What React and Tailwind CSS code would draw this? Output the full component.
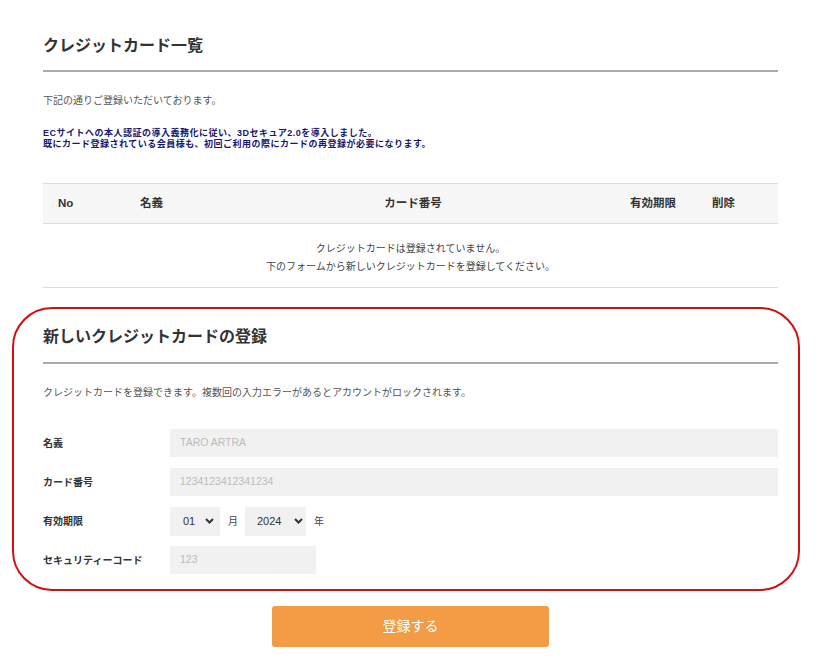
import React from "react";

const FONT = "font-['Liberation_Sans','Noto_Sans_CJK_JP',sans-serif]";

function Chevron() {
  return (
    <svg width="9" height="6" viewBox="0 0 9 6" className="block">
      <path d="M1 1 L4.5 4.5 L8 1" fill="none" stroke="#333" strokeWidth="2" />
    </svg>
  );
}

function Row({ label, children }) {
  return (
    <div className="flex items-center h-[28px]">
      <div className="w-[127px] text-[10px] font-bold text-[#333]">{label}</div>
      <div className="flex-1 flex items-center h-full">{children}</div>
    </div>
  );
}

export default function App() {
  return (
    <div className={`${FONT} w-[825px] min-h-[671px] bg-white text-[#333]`}>
      <div className="pl-[43px] pr-[47px] pt-[34px]">
        <h1 className="text-[16px] leading-[24px] font-bold text-[#333]">クレジットカード一覧</h1>
        <div className="mt-[12px] h-[2px] bg-[#aaa]" />
        <p className="mt-[22px] text-[10px] leading-[14px] text-[#555]">下記の通りご登録いただいております。</p>
        <div className="mt-[20px] text-[9px] leading-[11px] font-bold text-[#16166e] tracking-[0.5px]">
          <p>ECサイトへの本人認証の導入義務化に従い、3Dセキュア2.0を導入しました。</p>
          <p>既にカード登録されている会員様も、初回ご利用の際にカードの再登録が必要になります。</p>
        </div>
        <div className="mt-[33px] border-t border-b border-[#ddd]">
          <div className="flex items-center h-[40px] bg-[#f7f7f7] border-b border-[#ddd] text-[11.5px] font-bold text-[#333]">
            <div className="w-[97px] pl-[15px]">No</div>
            <div className="w-[120px]">名義</div>
            <div className="w-[306px] text-center">カード番号</div>
            <div className="w-[146px] pl-[64px]">有効期限</div>
            <div className="flex-1">削除</div>
          </div>
          <div className="pt-[16px] pb-[11px] text-center text-[10px] leading-[18px] text-[#444]">
            <p>クレジットカードは登録されていません。</p>
            <p>下のフォームから新しいクレジットカードを登録してください。</p>
          </div>
        </div>
      </div>

      <div className="mt-[19px] ml-[12px] w-[788px] border-2 border-[#d50f0f] rounded-[40px] pl-[29px] pr-[20px] pt-[16px] pb-[15px]">
        <h2 className="text-[16px] leading-[24px] font-bold text-[#333]">新しいクレジットカードの登録</h2>
        <div className="mt-[13px] h-[2px] bg-[#aaa]" />
        <p className="mt-[22px] text-[10px] leading-[14px] text-[#555]">
          クレジットカードを登録できます。複数回の入力エラーがあるとアカウントがロックされます。
        </p>
        <div className="mt-[29px] flex flex-col gap-[11px]">
          <Row label="名義">
            <div className="flex-1 h-full bg-[#f1f1f1] flex items-center pl-[10px] text-[10.5px] text-[#bbb]">TARO ARTRA</div>
          </Row>
          <Row label="カード番号">
            <div className="flex-1 h-full bg-[#f1f1f1] flex items-center pl-[10px] text-[10.5px] text-[#bbb]">1234123412341234</div>
          </Row>
          <Row label="有効期限">
            <div className="w-[50px] h-[29px] bg-[#f1f1f1] flex items-center pl-[13px] gap-[10px] text-[11px] text-[#333]">
              <span>01</span>
              <Chevron />
            </div>
            <span className="ml-[8px] text-[10px] text-[#444]">月</span>
            <div className="ml-[7px] w-[61px] h-[29px] bg-[#f1f1f1] flex items-center pl-[12px] gap-[13px] text-[11px] text-[#333]">
              <span>2024</span>
              <Chevron />
            </div>
            <span className="ml-[8px] text-[10px] text-[#444]">年</span>
          </Row>
          <Row label="セキュリティーコード">
            <div className="w-[146px] h-full bg-[#f1f1f1] flex items-center pl-[10px] text-[10.5px] text-[#bbb]">123</div>
          </Row>
        </div>
      </div>

      <div className="flex justify-center mt-[15px] pl-[43px] pr-[47px]">
        <button className="w-[277px] h-[41px] rounded-[3px] bg-[#f39b45] text-white text-[14px]">登録する</button>
      </div>
    </div>
  );
}
